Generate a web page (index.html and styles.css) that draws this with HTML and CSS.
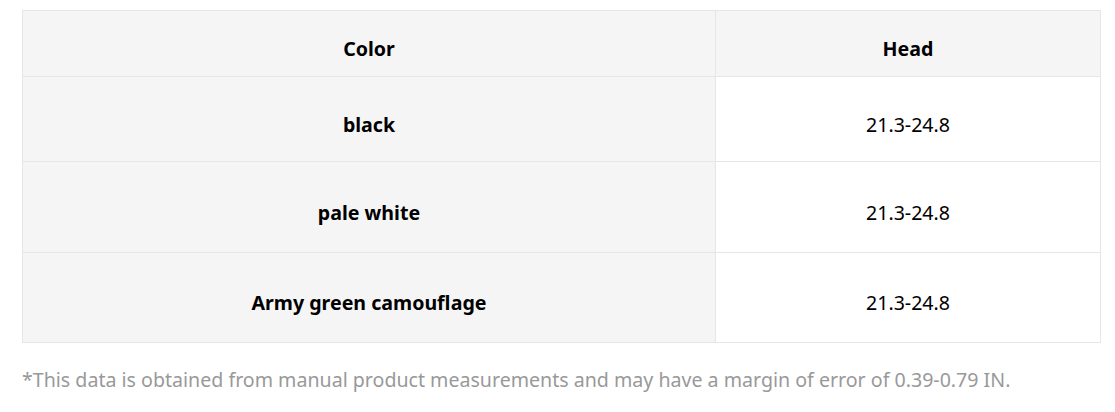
FILE: index.html
```html
<!DOCTYPE html>
<html lang="en">
<head>
  <meta charset="UTF-8" />
  <title>Size Chart</title>
  <link rel="stylesheet" href="styles.css">
</head>
<body>
  <div class="size-chart">
    <table class="size-table">
      <thead>
        <tr>
          <th class="col-color">Color</th>
          <th class="col-head">Head</th>
        </tr>
      </thead>
      <tbody>
        <tr class="row-1">
          <th>black</th>
          <td>21.3-24.8</td>
        </tr>
        <tr class="row-2">
          <th>pale white</th>
          <td>21.3-24.8</td>
        </tr>
        <tr class="row-3">
          <th>Army green camouflage</th>
          <td>21.3-24.8</td>
        </tr>
      </tbody>
    </table>
    <p class="note">*This data is obtained from manual product measurements and may have a margin of error of 0.39-0.79 IN.</p>
  </div>
</body>
</html>
```

FILE: styles.css
```css
body {
  margin: 0;
  padding: 0;
  background-color: #fff;
  font-family: "Noto Sans", "Open Sans", Arial, sans-serif;
  color: #000;
}

.size-chart {
  padding: 10px 15px 0 22px;
}

.size-table {
  width: 1079px;
  border-collapse: collapse;
  table-layout: fixed;
}

.size-table th,
.size-table td {
  border: 1px solid #e6e6e6;
  text-align: center;
  vertical-align: middle;
  font-size: 19.6px;
  padding: 10px 0 0 0;
}

.size-table th {
  font-weight: bold;
  background-color: #f5f5f5;
}

.size-table td {
  font-weight: normal;
  background-color: #fff;
}

.col-color {
  width: 692px;
}

thead tr {
  height: 66px;
}

.row-1 {
  height: 85px;
}

.row-2 {
  height: 91px;
}

.row-3 {
  height: 90px;
}

.note {
  margin: 23px 0 0 0;
  font-size: 19.6px;
  color: #999;
}
```
